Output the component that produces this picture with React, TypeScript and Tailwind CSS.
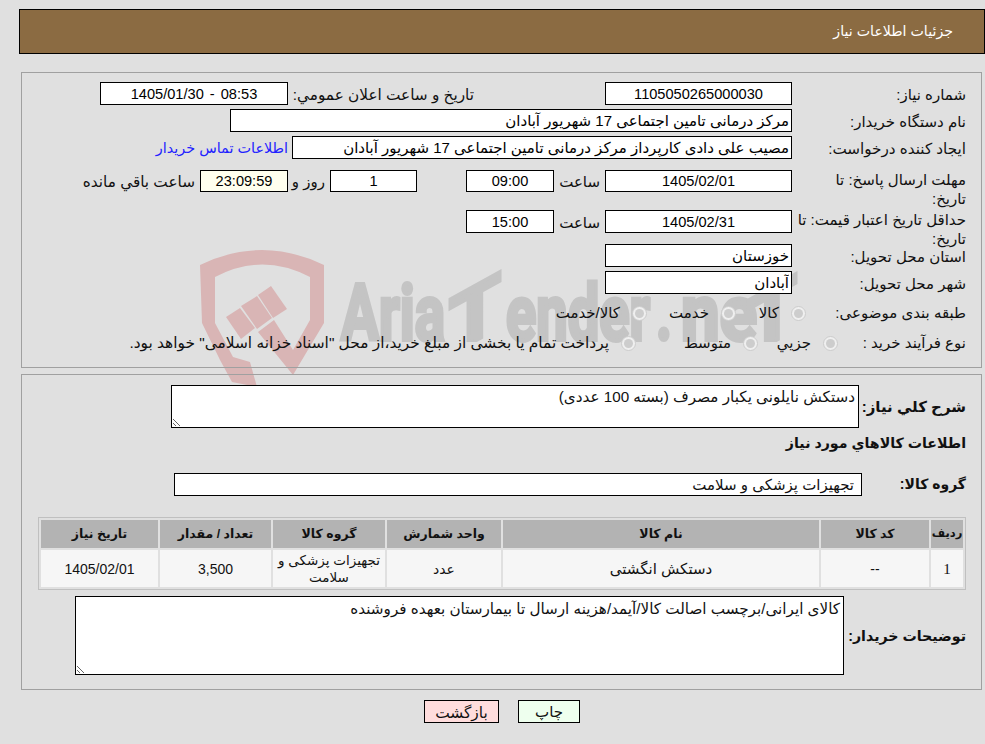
const fieldClass =
  "h-[23px] border border-black bg-white px-[2px] text-center text-[14.6px] leading-[21px] text-black outline-none";

function Field({
  value,
  width,
  className = "",
}: {
  value: string;
  width: string;
  className?: string;
}) {
  return <input readOnly value={value} className={`${fieldClass} ${width} ${className}`} />;
}

function Radio() {
  return (
    <span className="flex size-[15px] shrink-0 items-center justify-center rounded-full border border-[#cccccc] bg-[#efefef]">
      <span className="size-[9px] rounded-full bg-[#cdcdcd]" />
    </span>
  );
}

const wordmark = [
  { text: "Aria", x: 341, length: 104 },
  { text: "ender", x: 506, length: 144 },
  { text: ".", x: 656, length: 16 },
  { text: "ne", x: 681, length: 76 },
];

function Watermark() {
  const letter = {
    direction: "ltr" as const,
    lengthAdjust: "spacingAndGlyphs" as const,
    fontSize: 78,
    fontWeight: 700,
    fill: "#c4c4c4",
    stroke: "#c4c4c4",
    strokeWidth: 4,
    fontFamily: "Roboto, sans-serif",
  };
  return (
    <svg className="absolute left-0 top-0 z-0" width="985" height="744" viewBox="0 0 985 744" aria-hidden="true">
      <defs>
        <clipPath id="baseline">
          <rect x="0" y="0" width="985" height="342" />
        </clipPath>
      </defs>
      <g fill="#d9b5b5">
        <path d="M200 265 Q262 235 324 265 L324 323 L293 375 L258 332 L274 320 L293 350 L310 320 L310 277 Q262 252 215 277 L215 323 L233 357 L250 362 L257 387 L232 382 L220 360 L202 323 Z" />
        <polygon points="226,317 240,308 255,328 241,339" />
        <polygon points="241,306 257,296 272,318 257,329" />
        <polygon points="258,295 271,286 287,309 273,318" />
      </g>
      {wordmark.map((part) => (
        <text key={part.text} x={part.x} y="340" textLength={part.length} {...letter}>
          {part.text}
        </text>
      ))}
      <g clipPath="url(#baseline)">
        <text x="449" y="340" textLength="52" transform="translate(477 0) skewY(-29) translate(-477 0)" {...letter}>
          T
        </text>
        <text x="747" y="340" textLength="50" transform="translate(777 0) skewY(-29) translate(-777 0)" {...letter}>
          T
        </text>
      </g>
    </svg>
  );
}

export default function App() {
  return (
    <div
      dir="rtl"
      className="relative h-[744px] overflow-hidden bg-[#e0e0e0] pt-[9px] text-[15px] text-[#111111] [font-family:'Liberation_Sans','DejaVu_Sans',sans-serif]"
    >
      <Watermark />
      <div className="relative z-10">
        <header className="ml-[19px] flex h-[45px] items-center border border-black bg-[#8b6b42] pr-[31px] pt-[1px] text-[14.2px] text-white">
          جزئیات اطلاعات نیاز
        </header>

        <section className="ml-[21px] mr-[3px] mt-[18px] h-[296px] border border-[#a0a0a0] pr-[15px] pt-[9px]">
          <div className="flex h-[27px] items-start">
            <label className="w-[174px] pt-[2px]">شماره نیاز:</label>
            <Field value="1105050265000030" width="w-[187px]" />
            <label className="mr-[131px] w-[186px] whitespace-nowrap pt-[2px] text-[15.3px]">تاریخ و ساعت اعلان عمومي:</label>
            <Field value="08:53 - 1405/01/30" width="w-[188px]" className="[word-spacing:2px]" />
          </div>
          <div className="flex h-[27px] items-start">
            <label className="w-[174px] pt-[2px]">نام دستگاه خریدار:</label>
            <Field value="مرکز درمانی تامین اجتماعی 17 شهریور آبادان" width="w-[562px]" className="!text-right !text-[15px]" />
          </div>
          <div className="flex h-[34px] items-start">
            <label className="w-[174px] pt-[2px] text-[15.2px]">ایجاد کننده درخواست:</label>
            <Field
              value="مصیب علی دادی کارپرداز مرکز درمانی تامین اجتماعی 17 شهریور آبادان"
              width="w-[500px]"
              className="!text-right !text-[15px]"
            />
            <a className="mr-[4px] pt-[2px] text-[14.4px] text-[#2222ff]">اطلاعات تماس خریدار</a>
          </div>
          <div className="flex h-[40px] items-start">
            <label className="w-[174px] leading-[19px]">
              مهلت ارسال پاسخ: تا
              <br />
              تاریخ:
            </label>
            <Field value="1405/02/01" width="w-[187px]" className="!h-[22px]" />
            <span className="w-[51px] pr-[5px] pt-[1px]">ساعت</span>
            <Field value="09:00" width="w-[88px]" className="!h-[22px]" />
            <span className="w-[49px]" />
            <Field value="1" width="w-[87px]" className="!h-[22px]" />
            <span className="w-[42px] pr-[5px] pt-[1px]">روز و</span>
            <Field value="23:09:59" width="w-[88px]" className="!h-[22px] !bg-[#ffffee]" />
            <span className="pr-[5px] pt-[1px] text-[15.3px]">ساعت باقي مانده</span>
          </div>
          <div className="flex h-[34px] items-start">
            <label className="w-[174px] whitespace-nowrap leading-[19px]">
              حداقل تاریخ اعتبار قیمت: تا
              <br />
              تاریخ:
            </label>
            <Field value="1405/02/31" width="w-[187px]" />
            <span className="w-[51px] pr-[5px] pt-[2px]">ساعت</span>
            <Field value="15:00" width="w-[88px]" />
          </div>
          <div className="flex h-[27px] items-start">
            <label className="w-[174px] pt-[2px]">استان محل تحویل:</label>
            <Field value="خوزستان" width="w-[187px]" className="!text-right !text-[15px]" />
          </div>
          <div className="flex h-[28px] items-start">
            <label className="w-[174px] pt-[2px]">شهر محل تحویل:</label>
            <Field value="آبادان" width="w-[187px]" className="!text-right !text-[15px]" />
          </div>
          <div className="flex h-[29px] items-center">
            <label className="w-[160px] whitespace-nowrap">طبقه بندی موضوعی:</label>
            <Radio />
            <span className="mr-[12px] w-[43px]">کالا</span>
            <Radio />
            <span className="mr-[12px] w-[62px]">خدمت</span>
            <Radio />
            <span className="mr-[12px]">کالا/خدمت</span>
          </div>
          <div className="flex h-[30px] items-center">
            <label className="w-[128px] whitespace-nowrap">نوع فرآیند خرید :</label>
            <Radio />
            <span className="mr-[12px] w-[53px]">جزيي</span>
            <Radio />
            <span className="mr-[12px] w-[95px]">متوسط</span>
            <Radio />
            <span className="mr-[12px] whitespace-nowrap text-[15.4px]">
              پرداخت تمام یا بخشی از مبلغ خرید،از محل "اسناد خزانه اسلامی" خواهد بود.
            </span>
          </div>
        </section>

        <section className="ml-[21px] mr-[3px] mt-[6px] h-[316px] border border-[#a0a0a0] pr-[15px] pt-[10px]">
          <div className="flex h-[43px] items-center">
            <label className="w-[107px] whitespace-nowrap pt-[2px] text-[15px] font-bold">شرح كلي نياز:</label>
            <textarea
              readOnly
              defaultValue="دستکش نایلونی یکبار مصرف (بسته 100 عددی)"
              className="h-[43px] w-[688px] border border-black bg-white px-[3px] pt-[2px] text-[15.2px] leading-[18px] outline-none"
            />
          </div>
          <h3 className="flex h-[30px] items-center pt-[2px] text-[14.2px] font-bold">اطلاعات كالاهاي مورد نياز</h3>
          <div className="mt-[15px] flex h-[44px] items-start">
            <label className="w-[104px] pt-[1px] text-[14px] font-bold">گروه کالا:</label>
            <input
              readOnly
              value="تجهیزات پزشکی و سلامت"
              className="h-[23px] w-[688px] border border-black bg-white px-[7px] text-[15px] outline-none"
            />
          </div>
          <table className="w-[928px] table-fixed border-separate border-spacing-[2px] border border-[#c0c0c0] text-center">
            <thead>
              <tr className="h-[28px] bg-[#b3b3b3] text-[12.5px] font-bold">
                <th className="w-[32px] text-[11.5px]">ردیف</th>
                <th className="w-[108px]">کد کالا</th>
                <th className="w-[316px]">نام کالا</th>
                <th className="w-[114px]">واحد شمارش</th>
                <th className="w-[112px]">گروه کالا</th>
                <th className="w-[111px]">تعداد / مقدار</th>
                <th className="w-[117px]">تاریخ نیاز</th>
              </tr>
            </thead>
            <tbody>
              <tr className="h-[37px] bg-[#f6f6f6] text-[14px]">
                <td className="pt-[2px] text-[15px] [font-family:'Liberation_Serif',serif]">1</td>
                <td className="pt-[1px]">--</td>
                <td className="pt-[2px] text-[15px]">دستکش انگشتی</td>
                <td className="pt-[2px]">عدد</td>
                <td className="text-[13.5px] leading-[17px]">تجهیزات پزشکی و سلامت</td>
                <td className="pt-[1px]">3,500</td>
                <td className="pt-[1px]">1405/02/01</td>
              </tr>
            </tbody>
          </table>
          <div className="mt-[6px] flex items-center">
            <label className="w-[122px] whitespace-nowrap pt-[3px] text-[14.2px] font-bold">توضیحات خریدار:</label>
            <textarea
              readOnly
              defaultValue="کالای ایرانی/برچسب اصالت کالا/آیمد/هزینه ارسال تا بیمارستان بعهده فروشنده"
              className="h-[79px] w-[769px] border border-black bg-white px-[3px] pt-[3px] text-[15.2px] leading-[18px] outline-none"
            />
          </div>
        </section>

        <div dir="ltr" className="mt-[10px] flex justify-center gap-[19px] pl-[19px]">
          <button className="h-[23px] w-[75px] border border-black bg-[#ffdddd] text-[15.4px]">بازگشت</button>
          <button className="h-[23px] w-[62px] border border-black bg-[#eeffee] text-[15px]">چاپ</button>
        </div>
      </div>
    </div>
  );
}
